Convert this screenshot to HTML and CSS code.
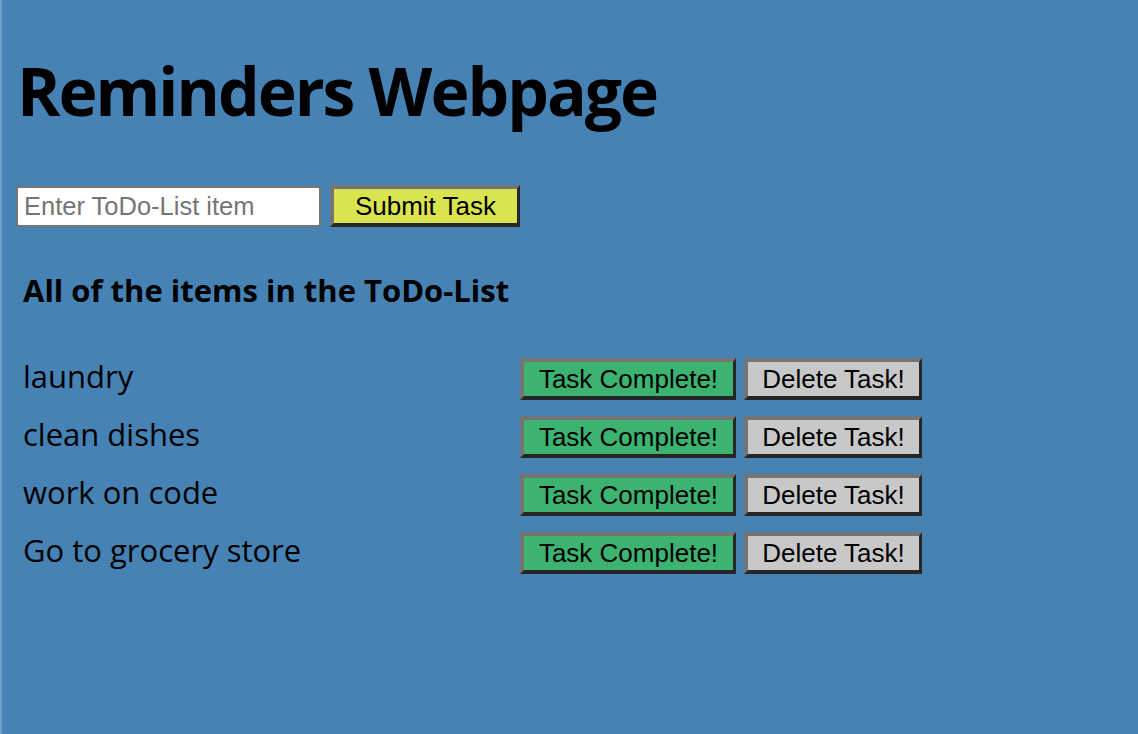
FILE: index.html
```html
<!DOCTYPE html>
<html lang="en">
<head>
<meta charset="utf-8">
<title>Reminders Webpage</title>
<link rel="stylesheet" href="styles.css">
</head>
<body>
<main class="page">
  <h1 class="title">Reminders Webpage</h1>
  <form class="entry">
    <input class="entry-input" type="text" placeholder="Enter ToDo-List item">
    <button class="btn btn-submit" type="button">Submit Task</button>
  </form>
  <h3 class="list-title">All of the items in the ToDo-List</h3>
  <ul class="list">
    <li class="item"><span class="item-text">laundry</span><button class="btn btn-complete" type="button">Task Complete!</button><button class="btn btn-delete" type="button">Delete Task!</button></li>
    <li class="item"><span class="item-text">clean dishes</span><button class="btn btn-complete" type="button">Task Complete!</button><button class="btn btn-delete" type="button">Delete Task!</button></li>
    <li class="item"><span class="item-text">work on code</span><button class="btn btn-complete" type="button">Task Complete!</button><button class="btn btn-delete" type="button">Delete Task!</button></li>
    <li class="item"><span class="item-text">Go to grocery store</span><button class="btn btn-complete" type="button">Task Complete!</button><button class="btn btn-delete" type="button">Delete Task!</button></li>
  </ul>
</main>
</body>
</html>
```
FILE: styles.css
```css
html, body {
  margin: 0;
  height: 100%;
}
body {
  background: #4682b4;
  border-left: 2px solid #6e9cc6;
  box-sizing: border-box;
  font-family: "Open Sans", Lato, "Liberation Sans", sans-serif;
  color: #000;
}
.page {
  padding: 0 0 0 15px;
}
.title {
  margin: 0;
  padding-top: 50px;
  font-size: 66px;
  font-weight: 700;
  line-height: 80px;
  letter-spacing: -2px;
}
.entry {
  display: flex;
  align-items: center;
  gap: 9px;
  margin-top: 55px;
}
.entry-input {
  box-sizing: border-box;
  width: 305px;
  height: 41px;
  border: 2px solid #767676;
  border-radius: 3px;
  background: #fff;
  padding: 1px 6px;
  font-family: "Liberation Sans", Arial, sans-serif;
  font-size: 25.5px;
  margin: 0 0 0 -1px;
}
.entry-input::placeholder {
  color: #757575;
}
.btn {
  box-sizing: border-box;
  height: 42px;
  border-style: solid;
  border-width: 4px 3px 4px 4px;
  border-color: #747474 #262626 #262626 #747474;
  padding: 0 12px;
  font-family: "Liberation Sans", Arial, sans-serif;
  font-size: 26px;
  color: #000;
  margin: 0;
  line-height: 1;
}
.btn-submit {
  width: 190px;
  background: #dae44e;
}
.btn-complete {
  width: 216px;
  background: #3cb371;
}
.btn-delete {
  width: 178px;
  background: #c8c8c8;
}
.list-title {
  margin: 43px 0 0 6px;
  font-size: 31px;
  font-weight: 700;
  line-height: 40px;
}
.list {
  list-style: none;
  margin: 48px 0 0 6px;
  padding: 0;
  display: flex;
  flex-direction: column;
  gap: 16px;
}
.item {
  display: flex;
  align-items: center;
  gap: 8px;
}
.item-text {
  width: 489px;
  font-size: 31px;
  line-height: 42px;
  position: relative;
  top: -3px;
}
```
